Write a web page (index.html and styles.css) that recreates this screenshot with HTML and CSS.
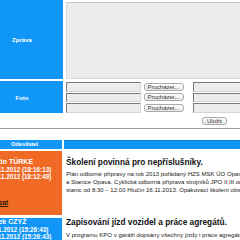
FILE: index.html
```html
<!DOCTYPE html>
<html lang="cs">
<head>
<meta charset="utf-8">
<title>Zprávy</title>
<link rel="stylesheet" href="styles.css">
</head>
<body>
<main class="page">
  <form class="form">
    <div class="form-row row-msg">
      <label class="label">Zpráva</label>
      <div class="msg-cell"><textarea class="msg"></textarea></div>
    </div>
    <div class="form-row row-foto">
      <label class="label">Foto</label>
      <div class="files">
        <div class="file-row"><input class="file-name" type="text"><button type="button" class="btn browse">Procházet...</button><input class="file-desc" type="text"></div>
        <div class="file-row"><input class="file-name" type="text"><button type="button" class="btn browse">Procházet...</button><input class="file-desc" type="text"></div>
        <div class="file-row"><input class="file-name" type="text"><button type="button" class="btn browse">Procházet...</button><input class="file-desc" type="text"></div>
      </div>
    </div>
    <div class="actions"><button type="button" class="btn save">Uložit</button></div>
  </form>
  <hr class="sep">
  <section class="list">
    <div class="list-head">
      <div class="head-left">Odesílatel</div>
      <div class="head-right"></div>
    </div>
    <article class="item item-first">
      <div class="sender sender-orange">
        <div class="name">Martin TÜRKE</div>
        <div class="date">12.11.2012 (18:16:13)</div>
        <div class="date">12.11.2012 (18:12:49)</div>
        <a class="del" href="#">Smazat</a>
      </div>
      <div class="body">
        <h2 class="title">Školení povinná pro nepříslušníky.</h2>
        <p class="text">Plán odborné přípravy na rok 2013 pořádaný HZS MSK ÚO Opava<br>a Stanice Opava. Cyklická odborná příprava strojníků JPO II,III od<br>stanic od 8:30 – 12:00 Hlučín 16.11.2013. Opakovací školení obsahuje</p>
      </div>
    </article>
    <article class="item">
      <div class="sender sender-blue">
        <div class="name">Marek CZYŽ</div>
        <div class="date date-shift">7.11.2012 (15:26:43)</div>
        <div class="date">27.11.2012 (15:26:43)</div>
      </div>
      <div class="body">
        <h2 class="title">Zapisování jízd vozidel a práce agregátů.</h2>
        <p class="text">V programu KPO v garáži dopsány všechny jízdy i práce agregátů.</p>
      </div>
    </article>
  </section>
</main>
</body>
</html>
```

FILE: styles.css
```css
html, body {
  margin: 0;
  padding: 0;
  width: 240px;
  height: 240px;
  overflow: hidden;
  background: #fff;
}

body {
  font-family: "Liberation Sans", Arial, sans-serif;
  color: #111;
}

.page {
  width: 240px;
}

/* ---------- form ---------- */
.form {
  margin: 0 0 0 -19px;
  width: 300px;
}

.form-row {
  display: grid;
  grid-template-columns: 82px 1fr;
  column-gap: 3px;
}

.row-msg {
  height: 79px;
}

.row-foto {
  margin-top: 2px;
  height: 32px;
}

.label {
  background: #1096f6;
  color: #fff;
  font-weight: bold;
  font-size: 6.1px;
  display: flex;
  align-items: center;
  justify-content: center;
}

.msg-cell {
  padding-top: 2px;
}

.msg {
  display: block;
  box-sizing: border-box;
  width: 100%;
  height: 77px;
  margin: 0;
  padding: 0;
  resize: none;
  background: #ececec;
  border: 1px solid #dadada;
  border-top-color: #c9c9c9;
}

.files {
  display: flex;
  flex-direction: column;
  gap: 1px;
  padding-top: 1px;
}

.file-row {
  display: flex;
  align-items: flex-start;
  height: 9.5px;
}

.file-name,
.file-desc {
  box-sizing: border-box;
  height: 9.5px;
  margin: 0;
  padding: 0;
  background: #ececec;
  border: 1px solid;
  border-color: #7c7c7c #d4d4d4 #d4d4d4 #7c7c7c;
}

.file-name {
  width: 74.5px;
}

.file-desc {
  width: 80px;
  margin-left: 9.5px;
}

.btn {
  box-sizing: border-box;
  margin: 0;
  padding: 0;
  font-family: "Liberation Sans", Arial, sans-serif;
  font-size: 6px;
  line-height: 1;
  color: #333;
  background: linear-gradient(#ffffff, #e9e9e9);
  border: 1px solid #a9a9a9;
  border-radius: 3px;
}

.browse {
  width: 40px;
  height: 8px;
  margin-left: 3px;
  margin-top: 0.7px;
}

.actions {
  padding: 4px 0 0 221.3px;
  height: 12px;
  box-sizing: border-box;
}

.save {
  display: block;
  width: 24.5px;
  height: 8px;
}

.sep {
  margin: 3px 0 0;
  height: 0;
  border: 0;
  border-top: 1px solid #9a9a9a;
}

/* ---------- list ---------- */
.list {
  margin: 11px 0 0 -13px;
  width: 320px;
}

.list-head {
  display: grid;
  grid-template-columns: 75px 1fr;
  column-gap: 2px;
  height: 9px;
}

.head-left,
.head-right {
  background: #1096f6;
}

.head-right {
  border-top: 1px solid #0b7fd6;
  box-sizing: border-box;
}

.head-left {
  color: #fff;
  font-weight: bold;
  font-size: 5.7px;
  line-height: 9px;
  text-align: center;
}

.item {
  display: grid;
  grid-template-columns: 75px 1fr;
  column-gap: 2px;
  margin-top: 3px;
}

.item-first {
  margin-top: 2px;
  min-height: 64px;
}

.sender {
  color: #fff;
  font-weight: bold;
  padding-left: 2px;
  white-space: nowrap;
}

.sender-orange {
  background: #f06a26;
}

.sender-blue {
  background: #1096f6;
}

.item-first .sender {
  padding-top: 6.5px;
}

.name {
  font-size: 7px;
  line-height: 8px;
  margin-left: -3px;
}

.date {
  font-size: 6.3px;
  line-height: 7px;
}

.date-shift {
  margin-left: 0.5px;
}

.del {
  display: block;
  margin-top: 19px;
  margin-left: -3px;
  color: #2a1a10;
  font-size: 6.3px;
  line-height: 7px;
  text-decoration: underline;
}

.body {
  padding-left: 2px;
  white-space: nowrap;
}

.item-first .body {
  padding-top: 6.5px;
}

.title {
  margin: 0;
  font-size: 8.3px;
  line-height: 9px;
  font-weight: bold;
  color: #111;
}

.text {
  margin: 4.8px 0 0;
  font-size: 6.05px;
  line-height: 7.7px;
  color: #222;
}
```
